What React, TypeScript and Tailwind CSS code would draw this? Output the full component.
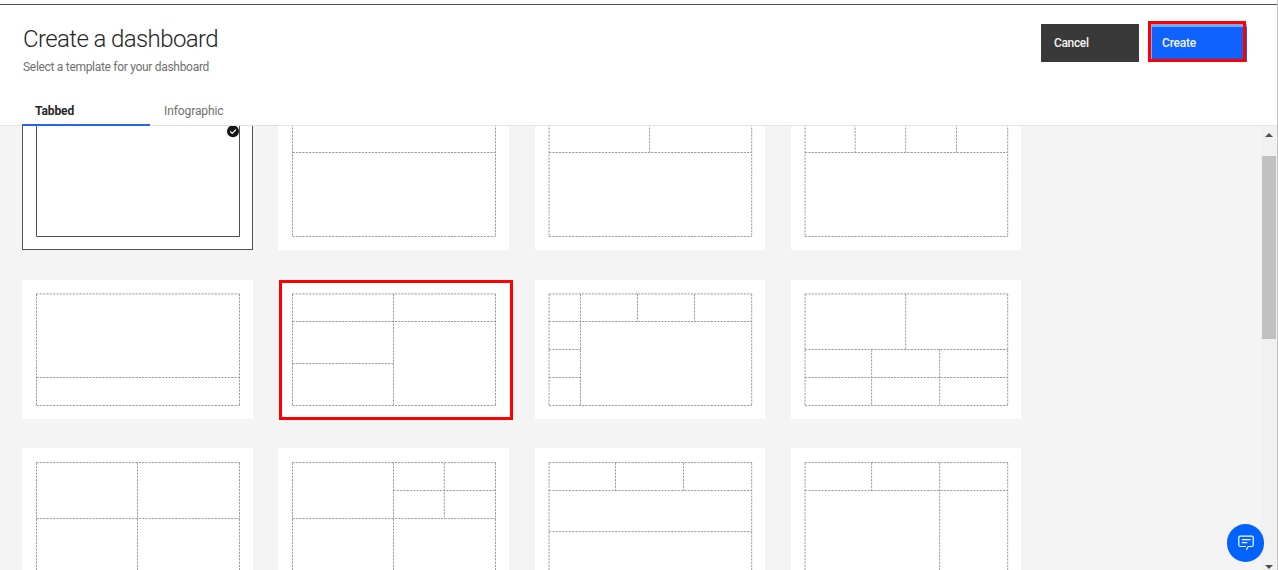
type Line = [number, number, number, number];

const L = 14.5;
const R = 217.5;
const T = 13.5;
const B = 125.5;

type Template = { id: string; lines: Line[] };

const rows: Template[][] = [
  [
    { id: 'single', lines: [] },
    { id: 'header', lines: [[L, 41.5, R, 41.5]] },
    { id: 'two-header', lines: [[L, 41.5, R, 41.5], [114.6, T, 114.6, 41.5]] },
    {
      id: 'four-header',
      lines: [[L, 41.5, R, 41.5], [64.1, T, 64.1, 41.5], [114.7, T, 114.7, 41.5], [165.5, T, 165.5, 41.5]],
    },
  ],
  [
    { id: 'footer', lines: [[L, 97.5, R, 97.5]] },
    { id: 'split', lines: [[L, 41.5, R, 41.5], [115.5, T, 115.5, B], [L, 83.5, 115.5, 83.5]] },
    {
      id: 'side-header',
      lines: [
        [L, 41.5, R, 41.5],
        [45.5, T, 45.5, B],
        [102.5, T, 102.5, 41.5],
        [159.5, T, 159.5, 41.5],
        [L, 69.5, 45.5, 69.5],
        [L, 97.5, 45.5, 97.5],
      ],
    },
    {
      id: 'six-footer',
      lines: [
        [114.7, T, 114.7, 69.5],
        [L, 69.5, R, 69.5],
        [L, 97.5, R, 97.5],
        [80.6, 69.5, 80.6, B],
        [148.6, 69.5, 148.6, B],
      ],
    },
  ],
  [
    { id: 'quarters', lines: [[L, 69.5, R, 69.5], [115.5, T, 115.5, B]] },
    {
      id: 'quarters-split',
      lines: [[L, 69.5, R, 69.5], [115.5, T, 115.5, B], [115.5, 41.5, R, 41.5], [166.3, T, 166.3, 69.5]],
    },
    {
      id: 'three-header',
      lines: [[L, 41.5, R, 41.5], [80.5, T, 80.5, 41.5], [148.5, T, 148.5, 41.5], [L, 82.5, R, 82.5]],
    },
    {
      id: 'three-side',
      lines: [[L, 41.5, R, 41.5], [80.6, T, 80.6, 41.5], [148.6, T, 148.6, B]],
    },
  ],
];

function Preview({ lines, selected, column, row }: { lines: Line[]; selected: boolean; column: number; row: number }) {
  const left = column > 1 ? 14 : L;
  const right = column > 1 ? 216.7 : R;
  const top = row === 1 ? 13.9 : T;
  const frame: Line[] = [
    [left, top, right, top],
    [left, B, right, B],
    [left, top, left, B],
    [right, top, right, B],
  ];
  const inner = lines.map(([x1, y1, x2, y2]): Line => [x1 === L ? left : x1, y1 === T ? top : y1, x2 === R ? right : x2, y2]);
  return (
    <svg width="230" height="139" className="block" fill="none">
      <g
        transform={row === 2 ? 'translate(0 1.1)' : undefined}
        stroke={selected ? '#4d4d4d' : '#9c9c9c'}
        strokeDasharray={selected ? undefined : '2.2 1.1'}
      >
        {[...frame, ...inner].map(([x1, y1, x2, y2], i) => (
          <line key={i} x1={x1} y1={y1} x2={x2} y2={y2} />
        ))}
      </g>
      {selected && (
        <g>
          <circle cx="211" cy="20.3" r="6" fill="#161616" />
          <path d="M208.2 20.4l2 2 3.8-3.8" stroke="#fff" strokeWidth="1.3" />
        </g>
      )}
    </svg>
  );
}

export default function App() {
  return (
    <div className="flex h-[570px] w-[1278px] flex-col overflow-hidden border-r border-[#c6c6c6] bg-white font-['Roboto',sans-serif] text-[#262626]">
      <div className="h-1 shrink-0" />
      <header className="flex h-[122px] shrink-0 flex-col justify-between border-t border-b border-t-[#525252] border-b-[#e6e6e6]">
        <div className="flex items-start justify-between pl-[23px]">
          <div className="pt-[18px]">
            <h1 className="text-[24px] leading-8 font-light tracking-[-0.6px] whitespace-nowrap">Create a dashboard</h1>
            <p className="mt-[4px] text-[12px] leading-4 tracking-[-0.3px] whitespace-nowrap text-[#6f6f6f]">Select a template for your dashboard</p>
          </div>
          <div className="flex pt-[19px] pr-[30px]">
            <button className="h-[38px] w-[98px] bg-[#393939] pl-[13px] text-left text-[12px] font-medium tracking-[-0.35px] text-[#f4f4f4]">Cancel</button>
            <div className="relative ml-[9px] h-[38px] w-[99px]">
              <button className="h-[38px] w-[99px] border-t-[3px] border-l-4 border-t-[#78a9ff] border-l-[#78a9ff] bg-[#0f62fe] pb-[3px] pl-[10px] text-left text-[12px] font-medium tracking-[-0.2px] text-[#f4f4f4]">Create</button>
              <div className="absolute -top-[3px] left-0 h-[41px] w-[98px] border-[3px] border-[#ff0000]" />
            </div>
          </div>
        </div>
        <nav className="-mb-px flex pl-[22px] text-[12px] leading-4">
          <div className="h-[23px] w-[128px] border-b-2 border-[#2467e5] pl-[13px] font-bold tracking-[-0.1px]">Tabbed</div>
          <div className="ml-px h-[23px] w-[128px] border-b border-[#e0e0e0] pl-[13px] tracking-[-0.1px] text-[#6f6f6f]">Infographic</div>
        </nav>
      </header>
      <main className="flex min-h-0 flex-1 bg-[#f4f4f4]">
        <div className="flex-1 overflow-hidden pl-[22px]">
          <div className="-mt-[15px] flex flex-col">
            {rows.map((row, r) => (
              <div key={r} className={r === 0 ? 'flex gap-[25.25px]' : r === 1 ? 'mt-[30px] flex gap-[25.25px]' : 'mt-[29px] flex gap-[25.25px]'}>
                {row.map((item, c) => (
                  <div key={item.id} className={c > 1 ? 'relative mr-[0.35px] h-[139px] w-[230.65px] shrink-0 bg-white' : 'relative h-[139px] w-[231px] shrink-0 bg-white'}>
                    <Preview lines={item.lines} selected={item.id === 'single'} column={c} row={r} />
                    {item.id === 'single' && <div className="absolute inset-0 border border-[#525252]" />}
                    {item.id === 'split' && (
                      <div className="absolute top-0 left-[0.75px] h-[140px] w-[234px] border-[3px] border-[#ff0000]" />
                    )}
                  </div>
                ))}
              </div>
            ))}
          </div>
        </div>
        <div className="flex w-4 flex-col items-center justify-between bg-[#f1f1f1] pt-[7px] pb-px">
          <svg width="8" height="4" fill="#505050"><path d="M0 4L4 0l4 4z" /></svg>
          <div className="mt-[19px] h-[183px] w-[14px] bg-[#c1c1c1]" />
          <div className="flex-1" />
          <svg width="8" height="4" fill="#505050"><path d="M0 0l4 4 4-4z" /></svg>
        </div>
      </main>
      <button aria-label="Chat" className="fixed top-[524px] left-[1227px] flex h-[38px] w-[37px] items-center justify-center rounded-full bg-[#0062ff]">
        <svg width="18" height="18" fill="none" stroke="#fff" strokeWidth="1.2">
          <path d="M9.5 15.8l1.7-3.3h3.5q1.5 0 1.5-1.5V3.7Q16.2 2.2 14.7 2.2H3.3Q1.8 2.2 1.8 3.7V11q0 1.5 1.5 1.5H9M4.8 5.7h8.9M4.8 8.7h5.5" />
        </svg>
      </button>
    </div>
  );
}
